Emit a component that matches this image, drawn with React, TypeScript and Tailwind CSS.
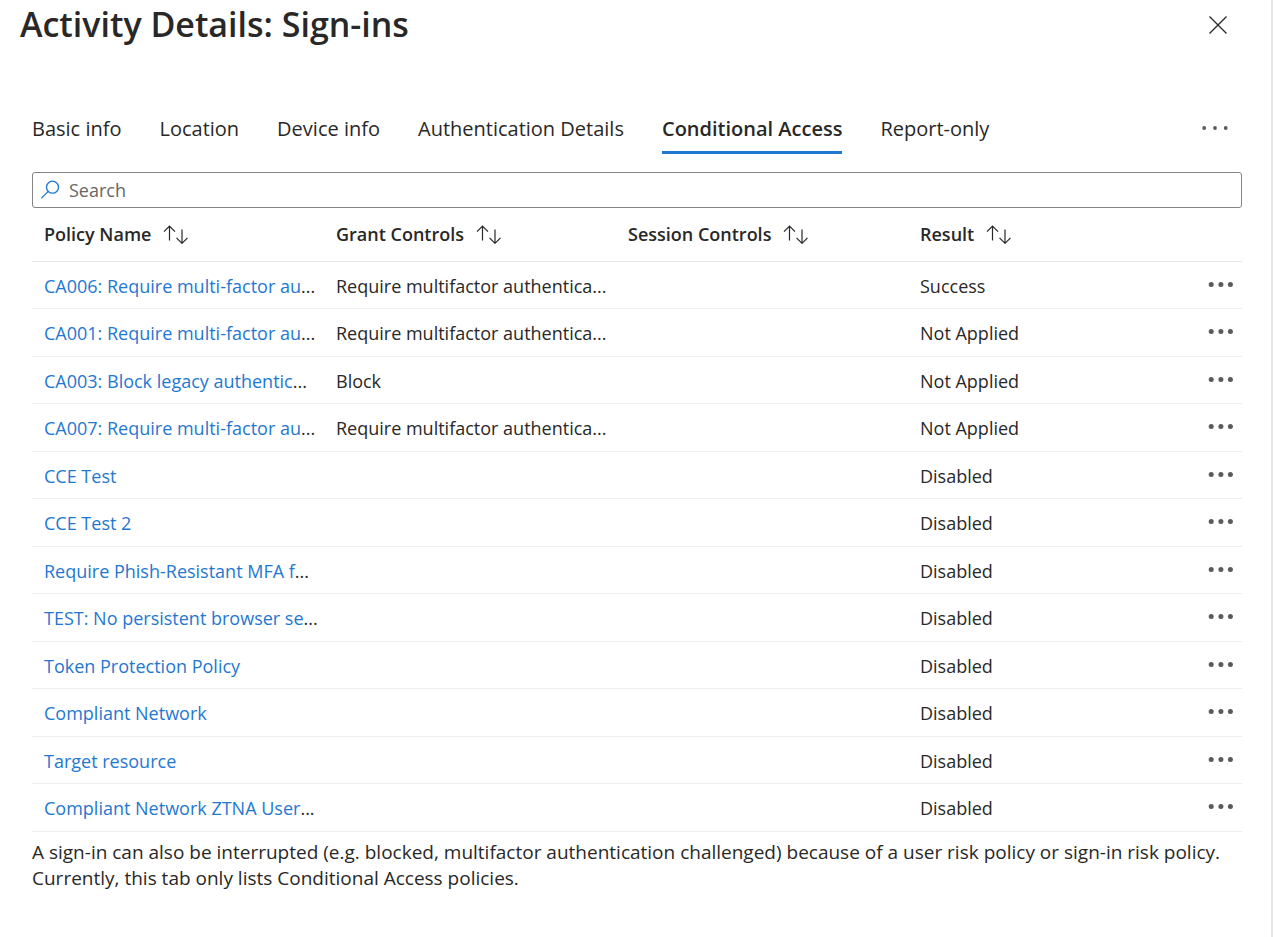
import React, { useState } from "react";

type Policy = {
  name: string;
  truncated?: boolean;
  grant?: string;
  result: string;
};

const tabs = [
  "Basic info",
  "Location",
  "Device info",
  "Authentication Details",
  "Conditional Access",
  "Report-only",
];

const columns = ["Policy Name", "Grant Controls", "Session Controls", "Result"];

const mfa = "Require multifactor authentica...";

const policies: Policy[] = [
  { name: "CA006: Require multi-factor au", truncated: true, grant: mfa, result: "Success" },
  { name: "CA001: Require multi-factor au", truncated: true, grant: mfa, result: "Not Applied" },
  { name: "CA003: Block legacy authentic", truncated: true, grant: "Block", result: "Not Applied" },
  { name: "CA007: Require multi-factor au", truncated: true, grant: mfa, result: "Not Applied" },
  { name: "CCE Test", result: "Disabled" },
  { name: "CCE Test 2", result: "Disabled" },
  { name: "Require Phish-Resistant MFA f", truncated: true, result: "Disabled" },
  { name: "TEST: No persistent browser se", truncated: true, result: "Disabled" },
  { name: "Token Protection Policy", result: "Disabled" },
  { name: "Compliant Network", result: "Disabled" },
  { name: "Target resource", result: "Disabled" },
  { name: "Compliant Network ZTNA User", truncated: true, result: "Disabled" },
];

function CloseIcon() {
  return (
    <svg width="18" height="18" viewBox="0 0 18 18" fill="none" stroke="#292827" strokeWidth="1.3" aria-hidden="true">
      <path d="M0.5 0.5 17.5 17.5M17.5 0.5 0.5 17.5" />
    </svg>
  );
}

function SearchIcon() {
  return (
    <svg width="20" height="20" viewBox="0 0 20 20" fill="none" stroke="#1f78d1" strokeWidth="1.3" aria-hidden="true">
      <circle cx="11.5" cy="7.2" r="6" />
      <path d="M7.3 11.4 0.3 18.4" />
    </svg>
  );
}

function SortIcon() {
  return (
    <svg width="26" height="20" viewBox="0 0 26 20" fill="none" stroke="#292827" strokeWidth="1.2" aria-hidden="true">
      <path d="M6.5 16.5V2.2M1 7.7 6.5 2.2 12 7.7" />
      <path d="M19 5.5V19.3M13.5 13.8 19 19.3 24.5 13.8" />
    </svg>
  );
}

function TabDots() {
  return (
    <svg width="26" height="6" viewBox="0 0 26 6" fill="#5c5a58" aria-hidden="true">
      <circle cx="2.2" cy="2" r="1.9" />
      <circle cx="13" cy="2" r="1.9" />
      <circle cx="23.7" cy="2" r="1.9" />
    </svg>
  );
}

function RowDots() {
  return (
    <svg width="25" height="6" viewBox="0 0 25 6" fill="#5c5a58" aria-hidden="true">
      <circle cx="3.2" cy="2.6" r="2.5" />
      <circle cx="12.9" cy="2.6" r="2.5" />
      <circle cx="22.4" cy="2.6" r="2.5" />
    </svg>
  );
}

export default function App() {
  const [active, setActive] = useState("Conditional Access");
  const [query, setQuery] = useState("");
  const rows = policies.filter((p) => p.name.toLowerCase().includes(query.toLowerCase()));

  return (
    <main className="min-h-screen border-r-2 border-[#e6e6e6] bg-white pr-[29px] pb-10 font-['Open_Sans','Noto_Sans',sans-serif] text-[19px] leading-[26px] text-[#292827]">
      <header className="flex items-center justify-between pt-1 pr-[15px] pl-5">
        <h1 className="pb-0.5 text-[34px] leading-10 font-semibold">Activity Details: Sign-ins</h1>
        <button type="button" aria-label="Close">
          <CloseIcon />
        </button>
      </header>

      <div className="pl-8">
        <div className="mt-[58px] flex items-center justify-between pr-[14px]">
          <div role="tablist" className="flex gap-[38px] text-xl">
            {tabs.map((tab) => (
              <button
                key={tab}
                type="button"
                role="tab"
                aria-selected={tab === active}
                onClick={() => setActive(tab)}
                className={
                  tab === active
                    ? "h-[50px] border-b-[3px] border-[#1f78d1] pt-0.5 font-semibold whitespace-nowrap"
                    : "h-[50px] border-b-[3px] border-transparent pt-0.5 whitespace-nowrap"
                }
              >
                {tab}
              </button>
            ))}
          </div>
          <button type="button" aria-label="More tabs">
            <TabDots />
          </button>
        </div>

        <label className="mt-[18px] flex h-9 items-center gap-2 rounded-[3px] border border-[#868482] px-2 text-lg">
          <SearchIcon />
          <input
            type="text"
            aria-label="Search"
            placeholder="Search"
            value={query}
            onChange={(e) => setQuery(e.target.value)}
            className="min-w-0 flex-1 outline-none placeholder:text-[#686664]"
          />
        </label>

        <table className="w-full table-fixed border-collapse text-left text-lg leading-[26px]">
          <thead>
            <tr className="h-[53px] border-b border-[#e6e6e6]">
              {columns.map((column) => (
                <th key={column} scope="col" className="pl-3 font-semibold">
                  <button type="button" className="flex items-center gap-3 whitespace-nowrap">
                    {column}
                    <SortIcon />
                  </button>
                </th>
              ))}
              <th className="w-[42px]" />
            </tr>
          </thead>
          <tbody>
            {rows.map((policy) => (
              <tr key={policy.name} className="border-b border-[#efefef] odd:h-[47px] even:h-12">
                <td className="pt-0.5 pl-3 whitespace-nowrap">
                  <a href="#policy" className="text-[#1f78d1]">
                    {policy.name}
                  </a>
                  {policy.truncated && "..."}
                </td>
                <td className="pt-0.5 pl-3 whitespace-nowrap">{policy.grant}</td>
                <td />
                <td className="pt-0.5 pl-3 whitespace-nowrap">{policy.result}</td>
                <td className="pl-2">
                  <button type="button" aria-label={`More actions for ${policy.name}`} className="block">
                    <RowDots />
                  </button>
                </td>
              </tr>
            ))}
          </tbody>
        </table>

        <p className="mt-[7px]">
          A sign-in can also be interrupted (e.g. blocked, multifactor authentication challenged) because of a user
          risk policy or sign-in risk policy. Currently, this tab only lists Conditional Access policies.
        </p>
      </div>
    </main>
  );
}
